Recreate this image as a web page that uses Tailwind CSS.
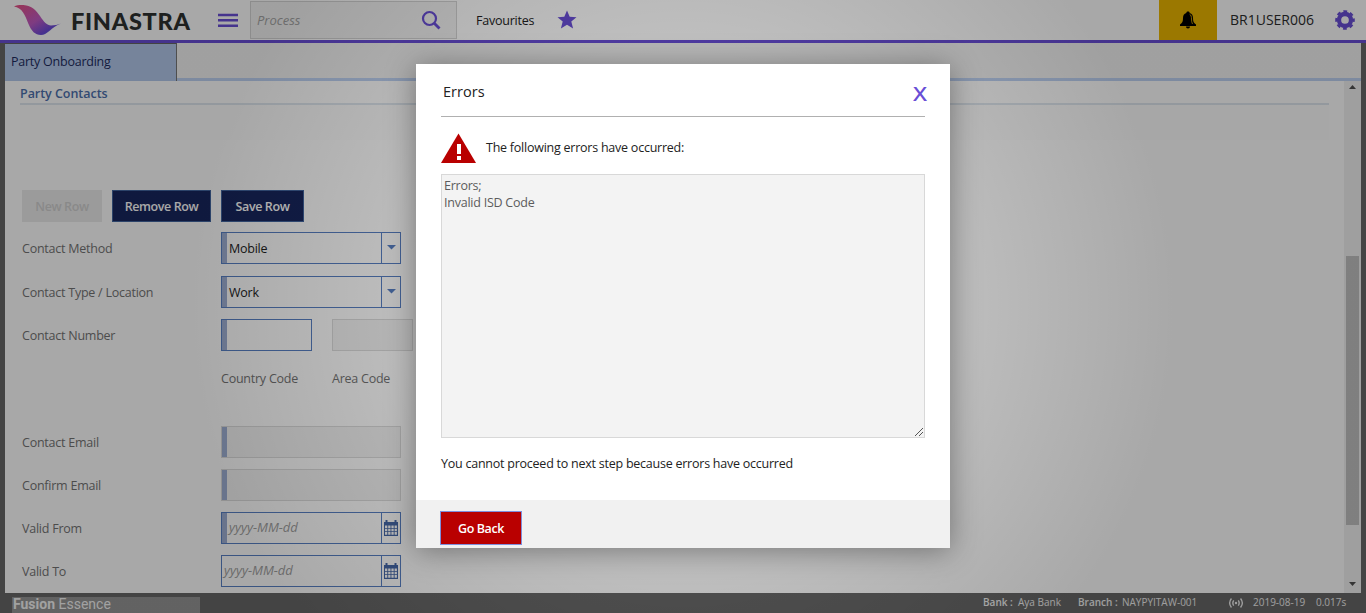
<!DOCTYPE html>
<html lang="en">
<head>
<meta charset="utf-8">
<title>Party Onboarding</title>
<script src="https://cdn.jsdelivr.net/npm/@tailwindcss/browser@4"></script>
</head>
<body class="relative h-[613px] w-[1366px] overflow-hidden bg-[#676767] font-['Open_Sans','Noto_Sans',sans-serif] text-[12.5px] leading-[17px] tracking-[-0.24px] text-[#747474]">
<div class="flex h-full flex-col">
  <header class="flex h-[43px] shrink-0 items-start border-b-3 border-[#694ed6] bg-white">
    <svg class="ml-[14px] mt-[4px] h-8 w-12" viewBox="0 0 48 32">
      <defs><linearGradient id="wing" x1="0" y1="0" x2="1" y2="1"><stop offset="0" stop-color="#e8507f"/><stop offset=".5" stop-color="#c05ac4"/><stop offset=".78" stop-color="#6a4ad8"/><stop offset="1" stop-color="#4d72d8"/></linearGradient></defs>
      <path fill="url(#wing)" d="M0 2.500C3 1 7 .8 11 1.200 18 2 22 6 26 12c4 6 7 9.500 11 9.500 3.500 0 7-1 10-2-5 2-8 4-11 7-4 3-6 4.500-9 4.500-6 0-9.500-4-12.500-11C11 11 8 3.500 0 2.500Z"/>
    </svg>
    <div class="ml-[9px] mt-[6px] w-[120px] whitespace-nowrap font-['Lato'] text-[23.500px] leading-[30px] font-black tracking-[0.7px] text-[#2d302f]">FINASTRA</div>
    <svg class="ml-[27px] mt-[13px] h-[15px] w-5" viewBox="0 0 20 15"><path fill="#694ed6" d="M0 .7h20v2.500H0ZM0 6.100h20v2.500H0ZM0 11.400h20v2.500H0Z"/></svg>
    <div class="ml-3 mt-px flex h-[38px] w-[207px] items-center justify-between border border-[#d4d4d4] bg-[#f3f3f3] pl-[6px] pr-[15px]">
      <span class="text-[13px] italic tracking-normal text-[#a4a4a4]">Process</span>
      <svg class="h-5 w-5" viewBox="0 0 20 20" fill="none" stroke="#694ed6" stroke-width="2.200"><circle cx="8.500" cy="8.500" r="6.500"/><path stroke-width="2.800" d="m13 13 5.500 5.500"/></svg>
    </div>
    <span class="ml-[19px] mt-3 w-[60px] whitespace-nowrap text-[12.5px] text-[#222]">Favourites</span>
    <svg class="ml-[21px] mt-[10px] h-5 w-5" viewBox="0 0 20 20"><path fill="#694ed6" d="m10 .5 2.700 6.300 6.800.5-5.200 4.300 1.800 6.800L10 14.800 3.900 18.400l1.800-6.800L.5 7.300l6.800-.5Z"/></svg>
    <div class="ml-auto flex h-10 w-[58px] items-center justify-center bg-[#ebb600]">
      <svg class="h-[18px] w-[18px]" viewBox="0 0 18 18"><path d="M9 .6c1 0 1.500.5 1.700 1.300C13 2.500 14 4.300 14 7c0 3.500.6 5 3 6.500V15H1v-1.500C3.400 12 4 10.500 4 7c0-2.700 1-4.500 3.300-5.100C7.500 1.100 8 .6 9 .6ZM7 15.500h4c0 1.300-.8 2-2 2s-2-.7-2-2Z"/><path fill="none" stroke="#ebb600" stroke-width=".8" d="M10.600 3.200C12 4 12.500 5.600 12.500 8c0 2 .2 3.600 1 5"/></svg>
    </div>
    <span class="ml-[13px] mt-[11px] w-[99px] whitespace-nowrap text-[14px] leading-[18px] tracking-normal text-[#2c2c2c]">BR1USER006</span>
    <svg class="ml-[6px] mr-[11px] mt-[10px] h-5 w-5" viewBox="0 0 20 20"><g fill="none" stroke="#694ed6"><circle cx="10" cy="10" r="6" stroke-width="4.300"/><circle cx="10" cy="10" r="8.700" stroke-width="2.200" stroke-dasharray="3.830 3" stroke-dashoffset="1.900"/></g></svg>
  </header>

  <main class="mx-[5px] flex h-[550px] shrink-0 flex-col bg-white">
    <div class="flex h-[38px] shrink-0 items-start border-b-3 border-[#bdd1f2] bg-[#f3f3f3]">
      <div class="h-[38px] w-[172px] border-t border-r border-t-[#666] border-r-[#777] bg-[#b3c8eb] pl-[6px] pt-[9px] text-[12.5px] text-[#1c2b5e]">Party Onboarding</div>
    </div>
    <div class="flex min-h-0 flex-1">
      <div class="flex w-[1339px] flex-col pl-[15px]">
        <div class="h-6 w-[1309px] border-b-2 border-[#dfe7ef] pt-[4px] text-[12.5px] font-semibold tracking-[-0.04px] text-[#4d70ad]">Party Contacts</div>
        <div class="h-[35px] w-[1309px] bg-[#fdfdfd]"></div>
        <div class="mt-[50px] flex gap-[10px] pl-[2px] text-[12.5px] font-semibold tracking-[-0.4px]">
          <div class="flex h-8 w-20 items-center justify-center bg-[#ebebeb] text-[#d0d0d0]">New Row</div>
          <div class="flex h-8 w-[99px] items-center justify-center border border-[#42659f] bg-[#17265e] text-white">Remove Row</div>
          <div class="flex h-8 w-[83px] items-center justify-center border border-[#42659f] bg-[#17265e] text-white">Save Row</div>
        </div>
        <div class="mt-[10px] flex items-center pl-[2px]">
          <span class="w-[199px]">Contact Method</span>
          <div class="flex h-8 w-[180px] items-center border border-[#5880c4]"><i class="h-full w-[5px] bg-[#9fb0d4]"></i><span class="w-[154px] pl-[2px] text-[#222]">Mobile</span><div class="flex h-full flex-1 items-center justify-center border-l border-[#5880c4]"><svg class="mb-[2px] h-[5px] w-[9px]" viewBox="0 0 9 5"><path fill="#5880c4" d="M0 0h9L4.500 4.500Z"/></svg></div></div>
        </div>
        <div class="mt-3 flex items-center pl-[2px]">
          <span class="w-[199px]">Contact Type / Location</span>
          <div class="flex h-8 w-[180px] items-center border border-[#5880c4]"><i class="h-full w-[5px] bg-[#9fb0d4]"></i><span class="w-[154px] pl-[2px] text-[#222]">Work</span><div class="flex h-full flex-1 items-center justify-center border-l border-[#5880c4]"><svg class="mb-[2px] h-[5px] w-[9px]" viewBox="0 0 9 5"><path fill="#5880c4" d="M0 0h9L4.500 4.500Z"/></svg></div></div>
        </div>
        <div class="mt-[11px] flex items-center pl-[2px]">
          <span class="w-[199px]">Contact Number</span>
          <div class="h-8 w-[91px] border border-[#5880c4]"><div class="h-full w-[5px] bg-[#9fb0d4]"></div></div>
          <div class="ml-5 h-8 w-[81px] border border-[#dcdcdc] bg-[#f4f4f4]"></div>
        </div>
        <div class="mt-[19px] flex pl-[201px]"><span class="w-[111px]">Country Code</span><span>Area Code</span></div>
        <div class="mt-[39px] flex items-center pl-[2px]">
          <span class="w-[199px]">Contact Email</span>
          <div class="h-8 w-[180px] border border-[#dcdcdc] bg-[#f4f4f4]"><div class="h-full w-[5px] bg-[#9fb0d4]"></div></div>
        </div>
        <div class="mt-[11px] flex items-center pl-[2px]">
          <span class="w-[199px]">Confirm Email</span>
          <div class="h-8 w-[180px] border border-[#dcdcdc] bg-[#f4f4f4]"><div class="h-full w-[5px] bg-[#9fb0d4]"></div></div>
        </div>
        <div class="mt-[11px] flex items-center pl-[2px]">
          <span class="w-[199px]">Valid From</span>
          <div class="flex h-8 w-[180px] items-center border border-[#5880c4]"><i class="h-full w-[5px] bg-[#9fb0d4]"></i><span class="w-[154px] pl-[2px] pb-[2px] text-[13px] italic tracking-normal text-[#a0a0a0]">yyyy-MM-dd</span><div class="flex h-full flex-1 items-center justify-center border-l border-[#5880c4]"><svg class="h-4 w-[14px]" viewBox="0 0 14 16"><path fill="#4668a8" fill-rule="evenodd" d="M0 2h1.500V0h2v2h7V0h2v2H14v14H0ZM1 5.500v2.400h2.300V5.500Zm3.200 0v2.400h2.300V5.500Zm3.200 0v2.400h2.300V5.500Zm3.200 0v2.400h2.300V5.500ZM1 8.800v2.400h2.300V8.800Zm3.200 0v2.400h2.300V8.800Zm3.200 0v2.400h2.300V8.800Zm3.200 0v2.400h2.300V8.800ZM1 12.100V14.700h2.300v-2.600Zm3.200 0v2.600h2.300v-2.600Zm3.200 0v2.600h2.300v-2.600Zm3.200 0v2.600h2.300v-2.600Z"/></svg></div></div>
        </div>
        <div class="mt-[11px] flex items-center pl-[2px]">
          <span class="w-[199px]">Valid To</span>
          <div class="flex h-8 w-[180px] items-center border border-[#5880c4]"><span class="w-[159px] pl-[2px] pb-[2px] text-[13px] italic tracking-normal text-[#a0a0a0]">yyyy-MM-dd</span><div class="flex h-full flex-1 items-center justify-center border-l border-[#5880c4]"><svg class="h-4 w-[14px]" viewBox="0 0 14 16"><path fill="#4668a8" fill-rule="evenodd" d="M0 2h1.500V0h2v2h7V0h2v2H14v14H0ZM1 5.500v2.400h2.300V5.500Zm3.200 0v2.400h2.300V5.500Zm3.200 0v2.400h2.300V5.500Zm3.200 0v2.400h2.300V5.500ZM1 8.800v2.400h2.300V8.800Zm3.200 0v2.400h2.300V8.800Zm3.200 0v2.400h2.300V8.800Zm3.200 0v2.400h2.300V8.800ZM1 12.100V14.700h2.300v-2.600Zm3.200 0v2.600h2.300v-2.600Zm3.200 0v2.600h2.300v-2.600Zm3.200 0v2.600h2.300v-2.600Z"/></svg></div></div>
        </div>
      </div>
      <div class="flex w-[17px] flex-col items-center bg-[#f1f1f1]">
        <svg class="mt-1 h-[4px] w-[7px]" viewBox="0 0 7 4"><path fill="#505050" d="M3.500 0 7 4H0Z"/></svg>
        <div class="mt-[167px] h-[269px] w-[13px] bg-[#c1c1c1]"></div>
        <svg class="mt-auto mb-[7px] h-[4px] w-[7px]" viewBox="0 0 7 4"><path fill="#505050" d="M0 0h7L3.500 4Z"/></svg>
      </div>
    </div>
  </main>

  <footer class="flex h-5 items-start pl-3 text-[10px] tracking-normal text-[#f0f0f0]">
    <div class="mt-1 h-4 w-[188px] whitespace-nowrap bg-[#959595] pl-px font-['Roboto'] text-[14px] leading-[15px] text-[#f4f4f4]"><b>Fusion</b> Essence</div>
    <div class="ml-auto flex w-[383px] whitespace-nowrap pt-px">
      <span class="w-[35px] font-semibold">Bank :</span><span class="w-[60px]">Aya Bank</span><span class="w-[44px] font-semibold">Branch :</span><span class="w-[106px]">NAYPYITAW-001</span>
      <svg class="mt-1 h-[10px] w-4" viewBox="0 0 16 11" fill="none" stroke="#f0f0f0" stroke-width="1.500"><path d="M3 .5Q-1 5.500 3 10.500M13 .5q4 5 0 10M5.500 2.500q-2 3 0 6M10.500 2.500q2 3 0 6"/><circle cx="8" cy="5.500" r="1.300" fill="#f0f0f0" stroke="none"/></svg>
      <span class="ml-[9px] w-[63px]">2019-08-19</span><span>0.017s</span>
    </div>
  </footer>
</div>

<div class="absolute inset-0 bg-[radial-gradient(circle_at_center,rgba(0,0,0,0.15)_0px,rgba(0,0,0,0.34)_490px)]"></div>

<section class="absolute left-[416px] top-16 flex h-[484px] w-[534px] flex-col bg-white text-[#222] shadow-[0_3px_28px_rgba(0,0,0,0.38)]">
  <div class="mx-[25px] flex h-[53px] shrink-0 items-start justify-between border-b border-[#b0b0b0] pl-[2px]">
    <h2 class="pt-[18px] text-[14.500px] leading-5 tracking-[0.05px]">Errors</h2>
    <span class="-mr-px pt-[18px] font-['Noto_Sans'] text-[20px] leading-6 font-medium text-[#694ed6]"><span class="inline-block scale-x-115">X</span></span>
  </div>
  <div class="ml-[25px] mt-4 flex h-[31px] shrink-0">
    <svg class="h-[31px] w-[35px]" viewBox="0 0 35 31"><path fill="#b90000" d="M17.500 .5 35 30H0Z"/><path fill="#fff" d="M16 11h4v10h-4ZM16 23h4v4h-4Z"/></svg>
    <span class="ml-[10px] mt-[6px]">The following errors have occurred:</span>
  </div>
  <div class="mx-[25px] mt-[10px] flex h-[264px] shrink-0 flex-col justify-between border border-[#d8d8d8] bg-[#f3f3f3] pl-[2px] pt-[2px] text-[#5c5c5c]">
    <p>Errors;<br>Invalid ISD Code</p>
    <svg class="mb-[1px] mr-[1px] h-2 w-2 self-end" viewBox="0 0 8 8" fill="none" stroke="#555"><path d="m0 8 8-8M4 8l4-4"/></svg>
  </div>
  <p class="ml-[25px] mt-[17px]">You cannot proceed to next step because errors have occurred</p>
  <div class="mt-auto flex h-12 shrink-0 items-start bg-[#f1f1f1] pl-[25px] pt-3">
    <button class="h-8 w-20 bg-[#b90000] text-[12.5px] font-semibold tracking-[-0.4px] text-white ring-1 ring-[#7f8fdc]">Go Back</button>
  </div>
</section>
</body>
</html>
